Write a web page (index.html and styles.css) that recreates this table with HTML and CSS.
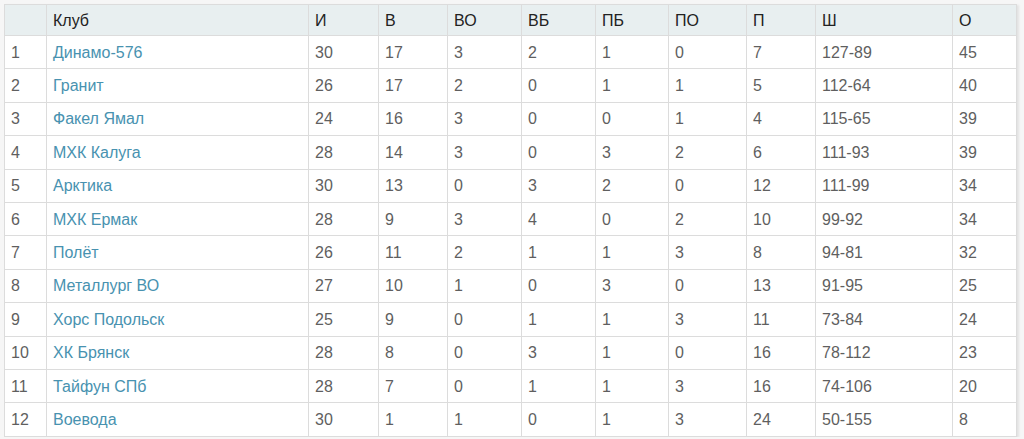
FILE: index.html
```html
<!DOCTYPE html>
<html lang="ru">
<head>
<meta charset="utf-8">
<title>Таблица</title>
<link rel="stylesheet" href="styles.css">
</head>
<body>
<table class="standings">
<colgroup>
<col class="c-pos"><col class="c-club"><col class="c-i"><col class="c-v"><col class="c-vo"><col class="c-vb"><col class="c-pb"><col class="c-po"><col class="c-p"><col class="c-sh"><col class="c-o">
</colgroup>
<thead>
<tr><th></th><th>Клуб</th><th>И</th><th>В</th><th>ВО</th><th>ВБ</th><th>ПБ</th><th>ПО</th><th>П</th><th>Ш</th><th>О</th></tr>
</thead>
<tbody>
<tr><td>1</td><td><a href="#">Динамо-576</a></td><td>30</td><td>17</td><td>3</td><td>2</td><td>1</td><td>0</td><td>7</td><td>127-89</td><td>45</td></tr>
<tr><td>2</td><td><a href="#">Гранит</a></td><td>26</td><td>17</td><td>2</td><td>0</td><td>1</td><td>1</td><td>5</td><td>112-64</td><td>40</td></tr>
<tr><td>3</td><td><a href="#">Факел Ямал</a></td><td>24</td><td>16</td><td>3</td><td>0</td><td>0</td><td>1</td><td>4</td><td>115-65</td><td>39</td></tr>
<tr><td>4</td><td><a href="#">МХК Калуга</a></td><td>28</td><td>14</td><td>3</td><td>0</td><td>3</td><td>2</td><td>6</td><td>111-93</td><td>39</td></tr>
<tr><td>5</td><td><a href="#">Арктика</a></td><td>30</td><td>13</td><td>0</td><td>3</td><td>2</td><td>0</td><td>12</td><td>111-99</td><td>34</td></tr>
<tr><td>6</td><td><a href="#">МХК Ермак</a></td><td>28</td><td>9</td><td>3</td><td>4</td><td>0</td><td>2</td><td>10</td><td>99-92</td><td>34</td></tr>
<tr><td>7</td><td><a href="#">Полёт</a></td><td>26</td><td>11</td><td>2</td><td>1</td><td>1</td><td>3</td><td>8</td><td>94-81</td><td>32</td></tr>
<tr><td>8</td><td><a href="#">Металлург ВО</a></td><td>27</td><td>10</td><td>1</td><td>0</td><td>3</td><td>0</td><td>13</td><td>91-95</td><td>25</td></tr>
<tr><td>9</td><td><a href="#">Хорс Подольск</a></td><td>25</td><td>9</td><td>0</td><td>1</td><td>1</td><td>3</td><td>11</td><td>73-84</td><td>24</td></tr>
<tr><td>10</td><td><a href="#">ХК Брянск</a></td><td>28</td><td>8</td><td>0</td><td>3</td><td>1</td><td>0</td><td>16</td><td>78-112</td><td>23</td></tr>
<tr><td>11</td><td><a href="#">Тайфун СПб</a></td><td>28</td><td>7</td><td>0</td><td>1</td><td>1</td><td>3</td><td>16</td><td>74-106</td><td>20</td></tr>
<tr><td>12</td><td><a href="#">Воевода</a></td><td>30</td><td>1</td><td>1</td><td>0</td><td>1</td><td>3</td><td>24</td><td>50-155</td><td>8</td></tr>
</tbody>
</table>
</body>
</html>
```
FILE: styles.css
```css
html, body {
  margin: 0;
  padding: 0;
  background: #f6f6f6;
}
body {
  padding: 4px 8px 0 4px;
  font-family: "Liberation Sans", Arial, sans-serif;
  font-size: 16px;
}
.standings {
  border-collapse: collapse;
  table-layout: fixed;
  width: 1013px;
  background: #fff;
  border: 1px solid #d6d6d6;
  box-shadow: 2px 1px 2px rgba(0,0,0,0.08);
}
.c-pos { width: 42px; }
.c-club { width: 262px; }
.c-i { width: 70px; }
.c-v { width: 69px; }
.c-vo { width: 74px; }
.c-vb { width: 74px; }
.c-pb { width: 73px; }
.c-po { width: 78px; }
.c-p { width: 69px; }
.c-sh { width: 137px; }
.c-o { width: 64px; }
.standings th,
.standings td {
  border: 1px solid #dcdcdc;
  text-align: left;
  padding: 1px 7px 0 6px;
  white-space: nowrap;
}
.standings th {
  background: #e8eff0;
  color: #222;
  font-weight: normal;
  height: 29px;
}
.standings td {
  color: #5f5f5f;
  height: 31.4px;
}
.standings a {
  color: #4892b0;
  text-decoration: none;
}
```
